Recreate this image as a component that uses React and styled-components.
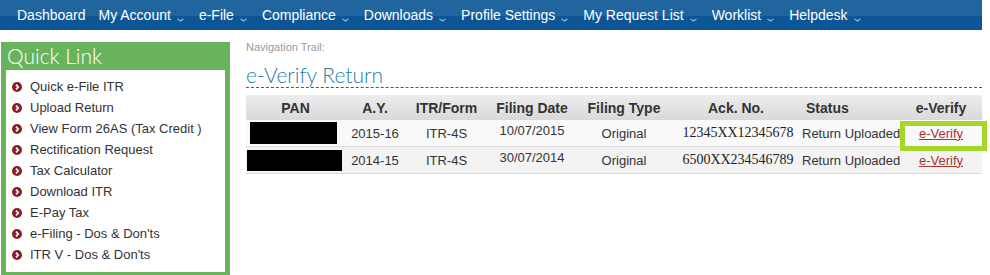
import React from "react";
import styled, { createGlobalStyle } from "styled-components";

const GlobalStyle = createGlobalStyle`
  body {
    margin: 0;
    background: #ffffff;
    font-family: "Liberation Sans", Arial, sans-serif;
  }
`;

const menu = [
  { label: "Dashboard", drop: false },
  { label: "My Account", drop: true },
  { label: "e-File", drop: true },
  { label: "Compliance", drop: true },
  { label: "Downloads", drop: true },
  { label: "Profile Settings", drop: true },
  { label: "My Request List", drop: true },
  { label: "Worklist", drop: true },
  { label: "Helpdesk", drop: true },
];

const links = [
  "Quick e-File ITR",
  "Upload Return",
  "View Form 26AS (Tax Credit )",
  "Rectification Request",
  "Tax Calculator",
  "Download ITR",
  "E-Pay Tax",
  "e-Filing - Dos & Don'ts",
  "ITR V - Dos & Don'ts",
];

const rows = [
  {
    pan: 87,
    panX: 4,
    panH: 22,
    ay: "2015-16",
    form: "ITR-4S",
    date: "10/07/2015",
    type: "Original",
    ack: "12345XX12345678",
    status: "Return Uploaded",
    mark: true,
  },
  {
    pan: 95,
    panX: 1,
    panH: 21,
    ay: "2014-15",
    form: "ITR-4S",
    date: "30/07/2014",
    type: "Original",
    ack: "6500XX234546789",
    status: "Return Uploaded",
    mark: false,
  },
];

function Caret() {
  return (
    <CaretIcon width="7" height="4" viewBox="0 0 7 4">
      <polyline points="0.5,1 3.5,3 6.5,1" fill="none" stroke="#9bb4cc" strokeWidth="1.1" />
    </CaretIcon>
  );
}

function Bullet() {
  return (
    <BulletIcon width="10" height="10" viewBox="0 0 10 10">
      <circle cx="5" cy="5" r="5" fill="#8c1d25" />
      <polyline points="4,2.6 6.2,5 4,7.4" fill="none" stroke="#ffffff" strokeWidth="1.7" />
    </BulletIcon>
  );
}

export default function App() {
  return (
    <>
      <GlobalStyle />
      <NavBar>
        {menu.map((m) => (
          <NavItem key={m.label} $drop={m.drop}>
            {m.label}
            {m.drop && <Caret />}
          </NavItem>
        ))}
      </NavBar>
      <Body>
        <QuickLink>
          <QuickTitle>Quick Link</QuickTitle>
          <LinkList>
            {links.map((l) => (
              <LinkItem key={l}>
                <Bullet />
                {l}
              </LinkItem>
            ))}
          </LinkList>
        </QuickLink>
        <Main>
          <Trail>Navigation Trail:</Trail>
          <PageTitle>e-Verify Return</PageTitle>
          <Table>
            <colgroup>
              <col style={{ width: 99 }} />
              <col style={{ width: 60 }} />
              <col style={{ width: 83 }} />
              <col style={{ width: 88 }} />
              <col style={{ width: 96 }} />
              <col style={{ width: 128 }} />
              <col style={{ width: 100 }} />
              <col style={{ width: 82 }} />
            </colgroup>
            <thead>
              <tr>
                <Th>PAN</Th>
                <Th>A.Y.</Th>
                <Th>ITR/Form</Th>
                <Th>Filing Date</Th>
                <Th>Filing Type</Th>
                <Th>Ack. No.</Th>
                <Th $left>Status</Th>
                <Th>e-Verify</Th>
              </tr>
            </thead>
            <tbody>
              {rows.map((r, i) => (
                <Row key={r.ack} $alt={i % 2 === 1}>
                  <PanCell>
                    <Redact style={{ width: r.pan, height: r.panH, marginLeft: r.panX }} />
                  </PanCell>
                  <Td>{r.ay}</Td>
                  <Td>{r.form}</Td>
                  <Td>
                    <DateText>{r.date}</DateText>
                  </Td>
                  <Td>{r.type}</Td>
                  <AckCell>{r.ack}</AckCell>
                  <Td $left>{r.status}</Td>
                  <Td>
                    <VerifyLink href="#">e-Verify</VerifyLink>
                    {r.mark && <Highlight />}
                  </Td>
                </Row>
              ))}
            </tbody>
          </Table>
        </Main>
      </Body>
    </>
  );
}

const NavBar = styled.nav`
  width: 982px;
  height: 30px;
  display: flex;
  align-items: center;
  padding-left: 17px;
  box-sizing: border-box;
  background: linear-gradient(to bottom, #21659f 0%, #21659f 53%, #0c5698 53%, #0c5698 100%);
`;

const NavItem = styled.span`
  display: flex;
  align-items: center;
  color: #ffffff;
  font-size: 14px;
  white-space: nowrap;
  margin-right: ${(p) => (p.$drop ? "15px" : "13px")};
`;

const CaretIcon = styled.svg`
  margin-left: 6px;
  margin-top: 10px;
`;

const Body = styled.div`
  display: flex;
  align-items: flex-start;
  margin-top: 12px;
`;

const QuickLink = styled.aside`
  width: 229px;
  margin-left: 1px;
  background: #69b35d;
  padding: 0 5px 4px 5px;
  box-sizing: border-box;
`;

const QuickTitle = styled.h2`
  margin: 0;
  height: 28px;
  line-height: 28px;
  padding-left: 1px;
  color: #ffffff;
  font-family: "Lato", "DejaVu Sans", sans-serif;
  font-weight: 300;
  font-size: 21px;
`;

const LinkList = styled.ul`
  list-style: none;
  margin: 0;
  padding: 6px 0 7px 6px;
  background: #ffffff;
`;

const LinkItem = styled.li`
  display: flex;
  align-items: center;
  height: 21px;
  font-size: 13px;
  color: #333333;
`;

const BulletIcon = styled.svg`
  margin-right: 8px;
  flex-shrink: 0;
`;

const Main = styled.main`
  margin-left: 16px;
  width: 736px;
`;

const Trail = styled.div`
  font-size: 11px;
  line-height: 13px;
  color: #9a9a9a;
  margin-top: -1px;
`;

const PageTitle = styled.h1`
  margin: 9px 0 0 0;
  height: 24px;
  line-height: 24px;
  font-family: "Lato", "DejaVu Sans", sans-serif;
  font-weight: 300;
  font-size: 21px;
  color: #2a7ca6;
  border-bottom: 1px dashed #555555;
`;

const Table = styled.table`
  margin-top: 7px;
  width: 736px;
  table-layout: fixed;
  border-collapse: collapse;
  font-size: 13px;
  color: #333333;
`;

const Th = styled.th`
  height: 25px;
  padding: 0 0 0 ${(p) => (p.$left ? "6px" : "0")};
  text-align: ${(p) => (p.$left ? "left" : "center")};
  font-size: 14px;
  font-weight: bold;
  color: #333333;
  background: linear-gradient(to bottom, #ededed, #d9d9d9);
  white-space: nowrap;
`;

const Row = styled.tr`
  background: ${(p) => (p.$alt ? "#f3f3f3" : "#f9f9f9")};
  border-bottom: 1px solid #dcdcdc;
`;

const Td = styled.td`
  position: relative;
  height: 26px;
  padding: 0 0 0 ${(p) => (p.$left ? "2px" : "0")};
  text-align: ${(p) => (p.$left ? "left" : "center")};
  white-space: nowrap;
`;

const DateText = styled.span`
  position: relative;
  top: -3px;
`;

const PanCell = styled.td`
  padding: 0;
  height: 26px;
  vertical-align: bottom;
`;

const Redact = styled.div`
  background: #000000;
  margin-bottom: 2px;
`;

const AckCell = styled.td`
  padding: 0 0 0 4px;
  text-align: center;
  font-family: "Liberation Serif", "Times New Roman", serif;
  font-size: 14px;
  color: #222222;
  white-space: nowrap;
`;

const VerifyLink = styled.a`
  color: #a8332f;
  text-decoration: underline;
`;

const Highlight = styled.span`
  position: absolute;
  left: 0;
  top: 1px;
  width: 87px;
  height: 30px;
  box-sizing: border-box;
  border: 5px solid #a5d62a;
  pointer-events: none;
`;
